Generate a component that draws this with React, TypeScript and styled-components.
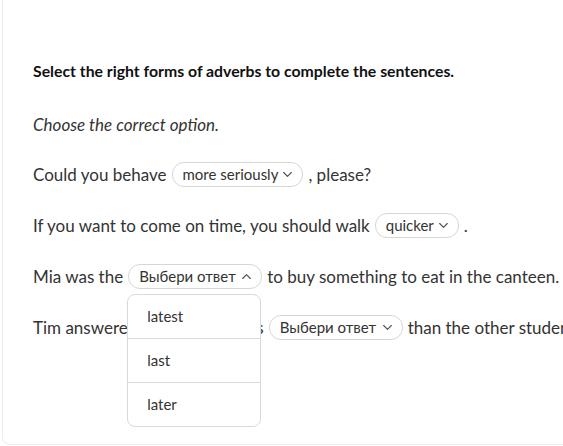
import React from "react";
import styled, { createGlobalStyle } from "styled-components";

// Global
const GlobalStyle = createGlobalStyle`
  html, body {
    margin: 0;
    padding: 0;
    background: #ffffff;
    overflow: hidden;
  }
  body {
    font-family: "Lato", "Liberation Sans", sans-serif;
    color: #333333;
  }
`;

// Styled Components
const Page = styled.div`
  width: 563px;
  height: 446px;
  padding-left: 2px;
  box-sizing: border-box;
  overflow: hidden;
`;

const Card = styled.div`
  margin-top: -12px;
  width: 640px;
  height: 457px;
  box-sizing: border-box;
  border: 1px solid #ececec;
  border-radius: 8px;
  padding: 72px 0 0 30px;
`;

const Heading = styled.h2`
  margin: 0 0 32px;
  font-size: 15.8px;
  line-height: 20px;
  font-weight: 700;
  color: #111111;
`;

const Instruction = styled.p`
  margin: 0 0 24px;
  font-size: 17px;
  line-height: 24px;
  font-style: italic;
  color: #333333;
`;

const Sentences = styled.div`
  display: flex;
  flex-direction: column;
  gap: 25px;
`;

const Row = styled.div`
  display: flex;
  align-items: center;
  gap: 5px;
  height: 26px;
  font-size: 17px;
  white-space: nowrap;
`;

const SelectWrap = styled.div`
  position: relative;
  display: inline-flex;
`;

const SelectPill = styled.button<{ $minWidth?: number }>`
  display: inline-flex;
  align-items: center;
  justify-content: space-between;
  gap: 5px;
  height: 25px;
  min-width: ${(p) => (p.$minWidth ? `${p.$minWidth}px` : "auto")};
  box-sizing: border-box;
  padding: 0 10px 0 10px;
  border: 1px solid #d6d6d6;
  border-radius: 12px;
  background: #ffffff;
  font-family: inherit;
  font-size: 15px;
  color: #333333;
  cursor: pointer;
`;

const Menu = styled.ul`
  position: absolute;
  top: calc(100% + 5px);
  left: -1px;
  width: 134px;
  margin: 0;
  padding: 0;
  list-style: none;
  box-sizing: border-box;
  border: 1px solid #dadada;
  border-radius: 8px;
  background: #ffffff;
  z-index: 2;
`;

const MenuItem = styled.li`
  height: 43px;
  display: flex;
  align-items: center;
  padding-left: 19px;
  font-size: 15px;
  color: #333333;
  border-bottom: 1px solid #dadada;

  &:last-child {
    border-bottom: none;
  }
`;

const Chevron: React.FC<{ up?: boolean }> = ({ up }) => (
  <svg width="9" height="5" viewBox="0 0 9 5" fill="none">
    <path
      d={up ? "M0.7 4.5 L4.5 0.7 L8.3 4.5" : "M0.7 0.5 L4.5 4.3 L8.3 0.5"}
      stroke="#555"
      strokeWidth="1.2"
      strokeLinecap="round"
      strokeLinejoin="round"
    />
  </svg>
);

interface SelectProps {
  value: string;
  open?: boolean;
  minWidth?: number;
  options?: string[];
}

const Select: React.FC<SelectProps> = ({ value, open, minWidth, options }) => (
  <SelectWrap>
    <SelectPill $minWidth={minWidth}>
      <span>{value}</span>
      <Chevron up={open} />
    </SelectPill>
    {open && options && (
      <Menu>
        {options.map((o) => (
          <MenuItem key={o}>{o}</MenuItem>
        ))}
      </Menu>
    )}
  </SelectWrap>
);

export default function App() {
  return (
    <Page>
      <GlobalStyle />
      <Card>
        <Heading>Select the right forms of adverbs to complete the sentences.</Heading>
        <Instruction>Choose the correct option.</Instruction>
        <Sentences>
          <Row>
            <span>Could you behave</span>
            <Select value="more seriously" />
            <span>, please?</span>
          </Row>
          <Row>
            <span>If you want to come on time, you should walk</span>
            <Select value="quicker" />
            <span>.</span>
          </Row>
          <Row>
            <span>Mia was the</span>
            <Select
              value="Выбери ответ"
              open
              minWidth={134}
              options={["latest", "last", "later"]}
            />
            <span>to buy something to eat in the canteen.</span>
          </Row>
          <Row>
            <span>Tim answered all the questions</span>
            <Select value="Выбери ответ" minWidth={134} />
            <span>than the other students.</span>
          </Row>
        </Sentences>
      </Card>
    </Page>
  );
}
